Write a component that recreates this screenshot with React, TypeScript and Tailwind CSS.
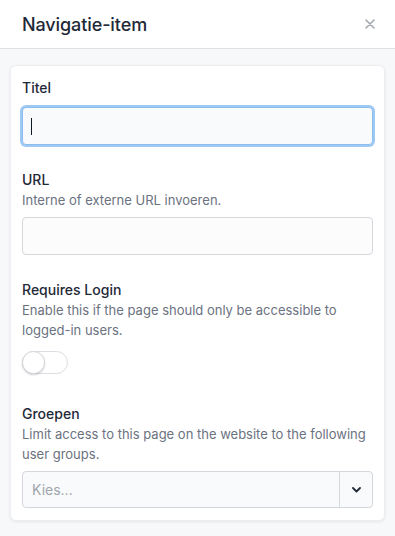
import React from 'react';

function Label({ children }: { children: React.ReactNode }) {
  return <label className="block text-[14px] leading-5 font-medium text-[#1f2937]">{children}</label>;
}

function Help({ children }: { children: React.ReactNode }) {
  return <p className="text-[13px] leading-5 text-[#6b7280]">{children}</p>;
}

export default function App() {
  return (
    <div className="w-[395px] h-[536px] bg-[#f7f8fa] font-['Inter',sans-serif] overflow-hidden">
      {/* Header */}
      <div className="h-[49px] bg-white border-b border-[#dcdfe4] flex items-center justify-between pl-[22px] pr-[20px]">
        <h2 className="text-[18px] font-medium text-[#1f2937] tracking-[-0.1px]">Navigatie-item</h2>
        <button className="w-[10px] h-[10px] flex items-center justify-center text-[#a3a8b0]" aria-label="Sluiten">
          <svg width="10" height="10" viewBox="0 0 10 10" fill="none" stroke="currentColor" strokeWidth="1.6" strokeLinecap="round">
            <path d="M1 1l8 8M9 1l-8 8" />
          </svg>
        </button>
      </div>

      {/* Body */}
      <div className="px-[10px] pt-[16px]">
        <div className="bg-white rounded-md border border-[#eceef1] shadow-[0_1px_3px_rgba(0,0,0,0.08)] px-[11px] pt-[12px] pb-[12px]">
          {/* Titel */}
          <div>
            <Label>Titel</Label>
            <div className="mt-[9px] relative">
              <input
                autoFocus
                type="text"
                className="w-full h-[38px] rounded-[4px] bg-[#f9fafc] border border-[#8cbdf0] ring-2 ring-[#9ec9f3] outline-none px-[9px] text-[14px] text-[#111827] caret-[#111827]"
              />
              <span className="pointer-events-none absolute left-[9px] top-[11px] w-px h-[17px] bg-[#111827]" />
            </div>
          </div>

          {/* URL */}
          <div className="mt-[25px]">
            <Label>URL</Label>
            <Help>Interne of externe URL invoeren.</Help>
            <input
              type="text"
              className="mt-[7px] w-full h-[38px] rounded-[4px] bg-[#fcfcfd] border border-[#d4d7dc] outline-none px-[10px] text-[14px]"
            />
          </div>

          {/* Requires Login */}
          <div className="mt-[25px]">
            <Label>Requires Login</Label>
            <Help>Enable this if the page should only be accessible to logged-in users.</Help>
            <div className="mt-[11px] relative w-[46px] h-[23px] rounded-full bg-white border border-[#dadde2]">
              <span className="absolute -left-px -top-px w-[23px] h-[23px] rounded-full bg-white border border-[#d5d8dd] shadow-[0_1px_2px_rgba(0,0,0,0.18)]" />
            </div>
          </div>

          {/* Groepen */}
          <div className="mt-[30px]">
            <Label>Groepen</Label>
            <Help>Limit access to this page on the website to the following user groups.</Help>
            <div className="mt-[7px] w-full h-[37px] rounded-[4px] bg-[#f9fafb] border border-[#d4d7dc] flex items-stretch">
              <div className="flex-1 flex items-center px-[9px] text-[14px] text-[#a0a5ad]">Kies...</div>
              <div className="w-[33px] border-l border-[#d4d7dc] flex items-center justify-center text-[#1f2937]">
                <svg width="9" height="6" viewBox="0 0 9 6" fill="none" stroke="currentColor" strokeWidth="1.8" strokeLinecap="round" strokeLinejoin="round">
                  <path d="M1 1l3.5 3.5L8 1" />
                </svg>
              </div>
            </div>
          </div>
        </div>
      </div>
    </div>
  );
}
